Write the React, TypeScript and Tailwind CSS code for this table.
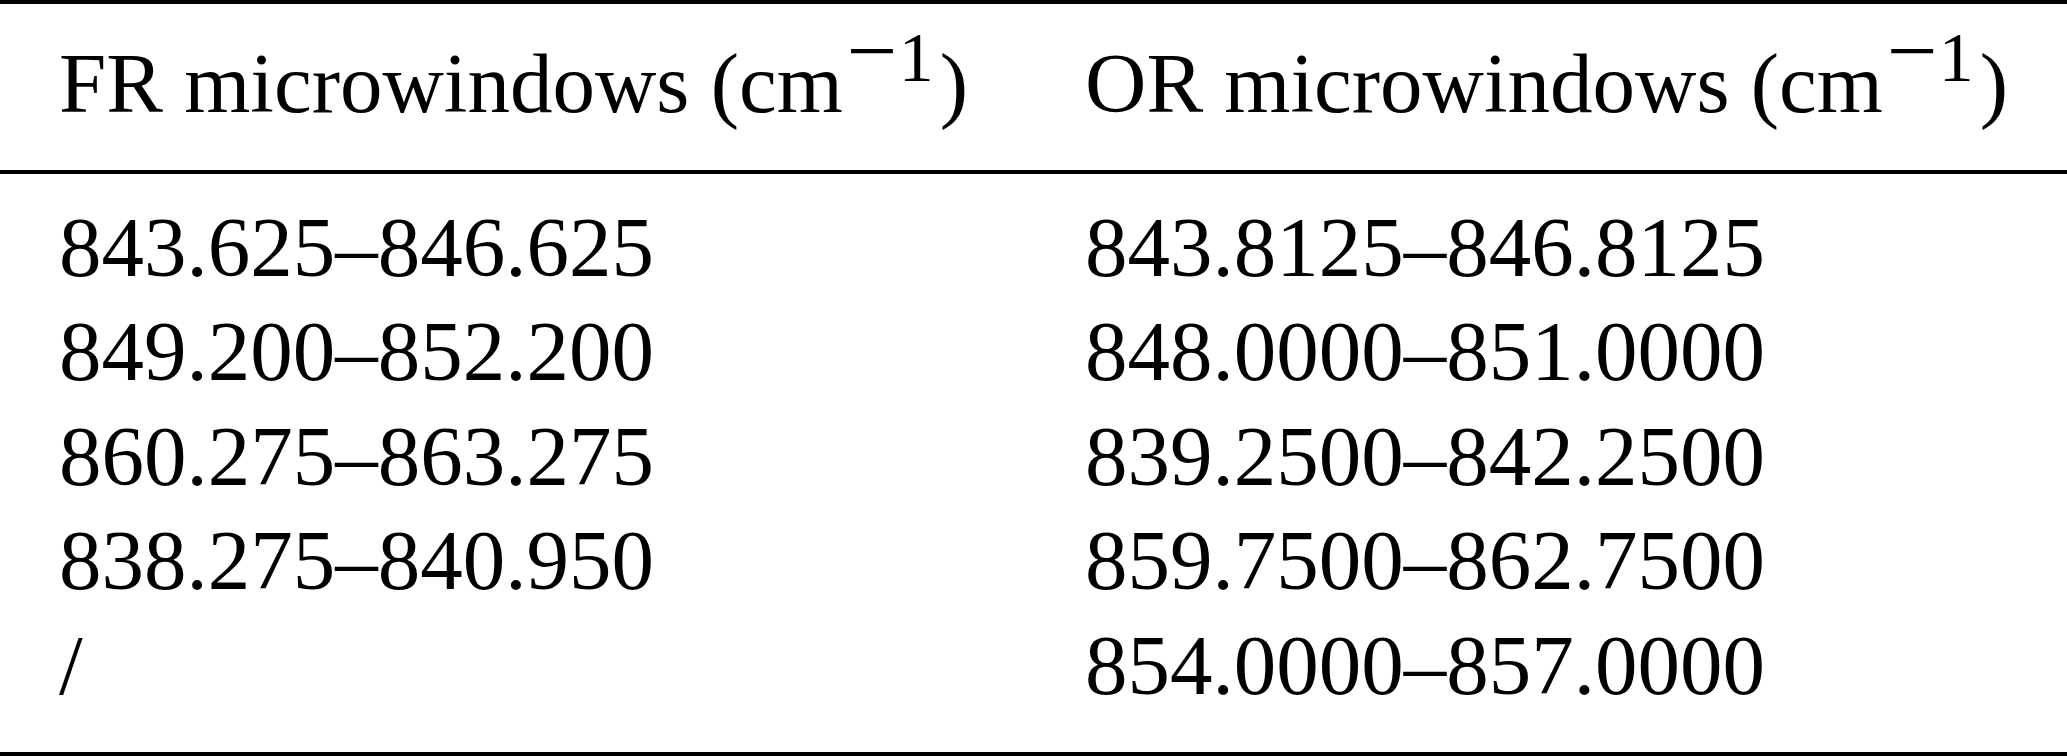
const fr = ["843.625–846.625", "849.200–852.200", "860.275–863.275", "838.275–840.950", "/"];
const or = [
  "843.8125–846.8125",
  "848.0000–851.0000",
  "839.2500–842.2500",
  "859.7500–862.7500",
  "854.0000–857.0000",
];

function Unit() {
  return (
    <>
      (cm
      <span className="relative top-[-31px] leading-none">
        <span className="ml-[4px] text-[90px]">−</span>
        <span className="ml-[1px] text-[70px]">1</span>
      </span>
      <span className="ml-[6px]">)</span>
    </>
  );
}

export default function App() {
  return (
    <div className="w-[2067px] h-[756px] bg-white text-black font-['Liberation_Serif','Times_New_Roman',serif] text-[85px] leading-[104.5px] whitespace-nowrap">
      <div className="border-t-[4px] border-b-[4px] border-black">
        <div className="grid grid-cols-[1026px_1fr] pl-[59px] pt-[27px] pb-[34px]">
          <div>
            FR microwindows <Unit />
          </div>
          <div>
            OR microwindows <Unit />
          </div>
        </div>
        <div className="border-t-[4px] border-black grid grid-cols-[1026px_1fr] pl-[59px] pt-[21px] pb-[35px]">
          <div className="flex flex-col">
            {fr.map((v) => (
              <div key={v}>{v}</div>
            ))}
          </div>
          <div className="flex flex-col">
            {or.map((v) => (
              <div key={v}>{v}</div>
            ))}
          </div>
        </div>
      </div>
    </div>
  );
}
